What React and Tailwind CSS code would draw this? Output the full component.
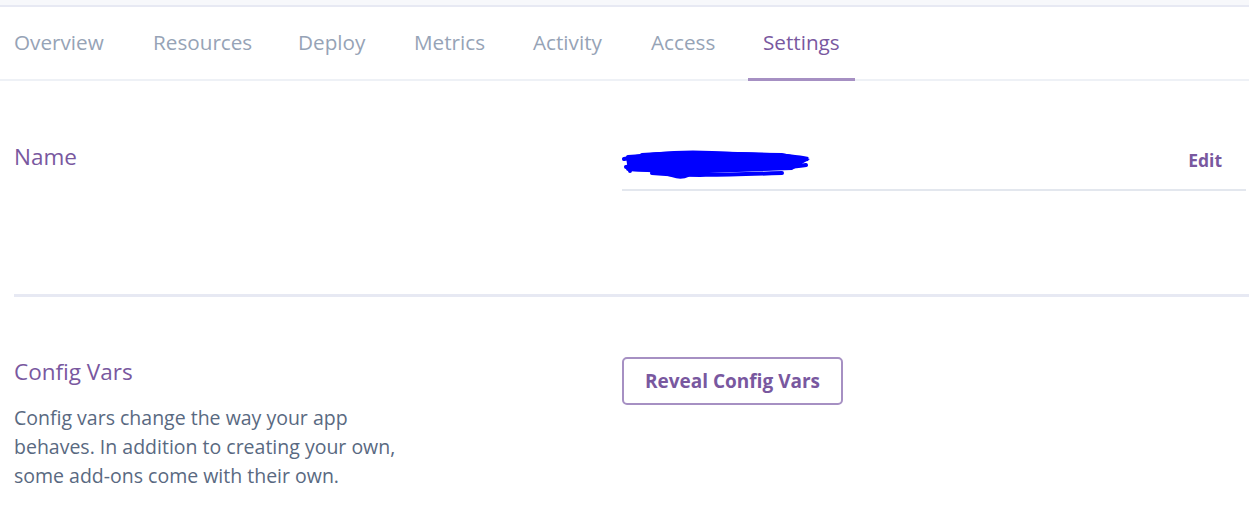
import React from "react";

const tabs = [
  { label: "Overview", w: "w-[138px] pl-[14px]" },
  { label: "Resources", w: "w-[145px] pl-[15px]" },
  { label: "Deploy", w: "w-[116px] pl-[15px]" },
  { label: "Metrics", w: "w-[119px] pl-[15px]" },
  { label: "Activity", w: "w-[118px] pl-[15px]" },
  { label: "Access", w: "w-[112px] pl-[15px]" },
];

export default function App() {
  return (
    <div
      className="w-[1249px] h-[530px] bg-white overflow-hidden"
      style={{ fontFamily: '"Open Sans", "Liberation Sans", sans-serif' }}
    >
      <div className="h-[5px] bg-[#f7f8fb]" />
      <div className="h-[2px] bg-[#e7e9f3]" />
      <nav className="flex h-[74px] border-b-2 border-[#eef1f6]">
        {tabs.map((t) => (
          <div
            key={t.label}
            className={`${t.w} flex items-center text-[20.7px] text-[#96a3b6] shrink-0 -mt-[1px]`}
          >
            {t.label}
          </div>
        ))}
        <div className="w-[107px] px-[15px] flex items-center text-[20.7px] text-[#79589f] border-b-[3px] border-[#a690c3] -mb-[2px] pt-[1px] shrink-0 whitespace-nowrap">
          Settings
        </div>
      </nav>

      <section className="pl-[14px] grid grid-cols-[608px_624px] pt-[62px] h-[213px]">
        <h2 className="text-[22.5px] text-[#79589f] leading-[28px]">Name</h2>
        <div className="flex items-start justify-between h-[48px] border-b-2 border-[#e3e7ee]">
          <svg width="192" height="34" viewBox="0 0 192 34" className="mt-[4px]">
            <g stroke="#0000ff" strokeWidth="4" fill="none" strokeLinecap="round">
              <path d="M2 12 C30 6 70 4 110 7 C140 8 165 7 186 12 C165 15 120 13 80 15 C50 16 22 17 4 20" />
              <path d="M6 22 C40 24 90 23 130 22 C155 21 172 20 184 18" />
              <path d="M20 8 C60 5 110 6 160 9" />
              <path d="M30 26 C60 29 100 28 160 26" />
              <path d="M10 16 C50 14 100 14 150 13" />
              <path d="M40 24 C50 30 60 31 66 28" />
              <path d="M6 10 L8 24" />
            </g>
            <path d="M6 8 L8 24 L60 27 L170 23 L188 12 L160 6 L50 5 Z" fill="#0000ff" />
          </svg>
          <span className="mt-[4px] mr-[24px] text-[17.5px] font-bold text-[#79589f]">Edit</span>
        </div>
      </section>

      <div className="ml-[14px] h-[3px] bg-[#e7e9f3]" />

      <section className="pl-[14px] grid grid-cols-[608px_624px] pt-[61px]">
        <div>
          <h2 className="text-[22.5px] text-[#79589f] leading-[28px]">Config Vars</h2>
          <p className="mt-[17px] w-[390px] text-[19.5px] leading-[29px] text-[#596981]">
            Config vars change the way your app behaves. In addition to creating your own, some add-ons come with their own.
          </p>
        </div>
        <div>
          <button className="w-[221px] h-[48px] -mt-[1px] border-2 border-[#a690c3] rounded-[5px] text-[19px] font-bold text-[#79589f]">
            Reveal Config Vars
          </button>
        </div>
      </section>
    </div>
  );
}
